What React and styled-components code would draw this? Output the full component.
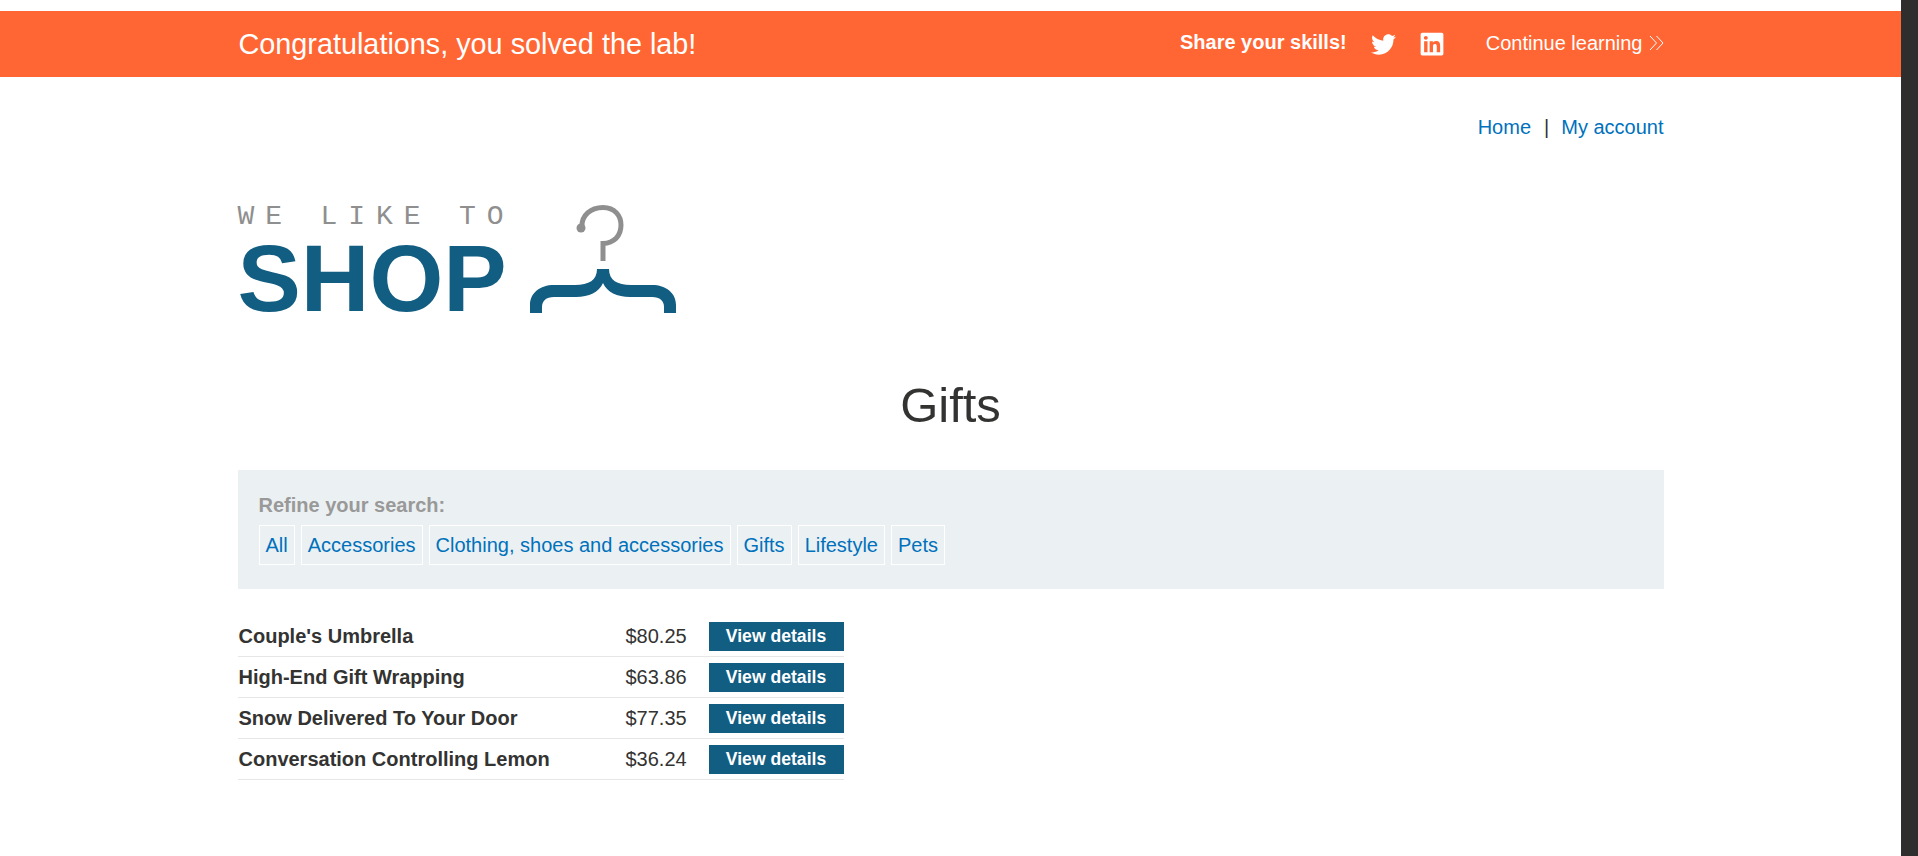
import React from "react";
import styled, { createGlobalStyle } from "styled-components";
import { FaTwitter, FaLinkedin } from "react-icons/fa";

const products = [
  { name: "Couple's Umbrella", price: "$80.25" },
  { name: "High-End Gift Wrapping", price: "$63.86" },
  { name: "Snow Delivered To Your Door", price: "$77.35" },
  { name: "Conversation Controlling Lemon", price: "$36.24" },
];

const categories = [
  "All",
  "Accessories",
  "Clothing, shoes and accessories",
  "Gifts",
  "Lifestyle",
  "Pets",
];

const Hanger = () => (
  <HangerSvg viewBox="0 0 146 108" width="146" height="108">
    <path
      d="M52 23 C51 10 61 2.5 73 2.5 C85 2.5 91 11 91 20 C91 31 84 38 73 38.5 V56"
      fill="none"
      stroke="#8f8f8f"
      strokeWidth="5"
    />
    <circle cx="51" cy="23" r="4.5" fill="#8f8f8f" />
    <path
      d="M0 108 V100 C0 88 10 80 24 80 H45 C59 80 67 75 67 64 H79 C79 75 87 80 101 80 H122 C136 80 146 88 146 100 V108 H134 V102 C134 96 130 92 122 92 H100 C87 92 77 87 73 78 C69 87 59 92 46 92 H24 C16 92 12 96 12 102 V108 Z"
      fill="#125d82"
    />
  </HangerSvg>
);

const ChevronsIcon = () => (
  <svg viewBox="0 0 15 16" width="15" height="16">
    <path
      d="M1 1 L7.5 8 L1 15 M7.5 1 L14 8 L7.5 15"
      fill="none"
      stroke="#fff"
      strokeWidth="1"
    />
  </svg>
);

const App = () => {
  return (
    <Page>
      <GlobalStyle />
      <Main>
        <Banner>
          <BannerInner>
            <BannerTitle>Congratulations, you solved the lab!</BannerTitle>
            <BannerActions>
              <ShareText>Share your skills!</ShareText>
              <SocialLink><FaTwitter size={25} /></SocialLink>
              <SocialLink><FaLinkedin size={26} /></SocialLink>
              <ContinueLink>
                Continue learning
                <ChevronsIcon />
              </ContinueLink>
            </BannerActions>
          </BannerInner>
        </Banner>
        <Content>
          <TopNav>
            <NavLink>Home</NavLink>
            <NavDivider>|</NavDivider>
            <NavLink>My account</NavLink>
          </TopNav>
          <Logo>
            <LogoText>
              <LogoTagline>WE LIKE TO</LogoTagline>
              <LogoWord>SHOP</LogoWord>
            </LogoText>
            <Hanger />
          </Logo>
          <Heading>Gifts</Heading>
          <FilterPanel>
            <FilterLabel>Refine your search:</FilterLabel>
            <FilterRow>
              {categories.map((category) => (
                <FilterLink key={category}>{category}</FilterLink>
              ))}
            </FilterRow>
          </FilterPanel>
          <ProductTable>
            {products.map((product) => (
              <ProductRow key={product.name}>
                <ProductName>{product.name}</ProductName>
                <ProductPrice>{product.price}</ProductPrice>
                <DetailsButton>View details</DetailsButton>
              </ProductRow>
            ))}
          </ProductTable>
        </Content>
      </Main>
      <ScrollStrip />
    </Page>
  );
};

export default App;

const GlobalStyle = createGlobalStyle`
  html, body {
    margin: 0;
    height: 100%;
    overflow: hidden;
    background: #fff;
  }
  body {
    color: #333332;
    font-family: "Liberation Sans", Arial, sans-serif;
    font-size: 20px;
  }
`;

const Page = styled.div`
  display: flex;
  height: 856px;
`;

const Main = styled.div`
  flex: 1;
  min-width: 0;
  padding-top: 11px;
`;

const ScrollStrip = styled.div`
  width: 17px;
  background: #2e2e2e;
`;

const Banner = styled.section`
  height: 66px;
  background: #ff6633;
  color: #fff;
`;

const BannerInner = styled.div`
  width: 1426px;
  height: 100%;
  margin: 0 auto;
  display: flex;
  align-items: center;
  justify-content: space-between;
`;

const BannerTitle = styled.h4`
  margin: 0;
  padding-left: 1px;
  font-size: 28.8px;
  font-weight: 400;
`;

const BannerActions = styled.div`
  display: flex;
  align-items: center;
`;

const ShareText = styled.span`
  margin: 0 24px 3px 0;
  font-size: 20px;
  font-weight: 700;
`;

const SocialLink = styled.a`
  display: flex;
  margin-right: 23px;
  color: #fff;
`;

const ContinueLink = styled.a`
  display: flex;
  align-items: center;
  gap: 6px;
  margin: 0 0 2px 18px;
  font-size: 20px;
  color: #fff;
`;

const Content = styled.main`
  width: 1426px;
  margin: 0 auto;
`;

const TopNav = styled.nav`
  display: flex;
  justify-content: flex-end;
  padding-top: 38px;
  line-height: 24px;
`;

const NavLink = styled.a`
  color: #0071bc;
`;

const NavDivider = styled.span`
  margin: 0 12px 0 13px;
  color: #333332;
`;

const Logo = styled.div`
  display: flex;
  align-items: flex-end;
  gap: 22px;
  margin-top: 66px;
  height: 108px;
`;

const LogoText = styled.div`
  display: flex;
  flex-direction: column;
  width: 270px;
`;

const LogoTagline = styled.span`
  margin-bottom: 10px;
  font-family: "Liberation Mono", "Courier New", monospace;
  font-size: 28px;
  letter-spacing: 10.9px;
  line-height: 24px;
  color: #8f8f8f;
  white-space: nowrap;
`;

const LogoWord = styled.span`
  margin-bottom: -4px;
  font-size: 95px;
  font-weight: 700;
  line-height: 78px;
  color: #125d82;
`;

const HangerSvg = styled.svg`
  display: block;
  flex: none;
`;

const Heading = styled.h1`
  margin: 64px 0 0;
  text-align: center;
  font-size: 49px;
  font-weight: 400;
  line-height: 56px;
`;

const FilterPanel = styled.section`
  margin-top: 37px;
  height: 119px;
  box-sizing: border-box;
  padding: 23px 20px 0 21px;
  background: #ebf0f2;
`;

const FilterLabel = styled.div`
  font-size: 20px;
  font-weight: 700;
  line-height: 24px;
  color: #999;
`;

const FilterRow = styled.div`
  display: flex;
  gap: 6px;
  margin-top: 8px;
`;

const FilterLink = styled.a`
  height: 40px;
  box-sizing: border-box;
  padding: 0 6px;
  border: 1px solid #fff;
  line-height: 38px;
  color: #0071bc;
`;

const ProductTable = styled.div`
  width: 606px;
  margin-top: 27px;
`;

const ProductRow = styled.div`
  display: flex;
  align-items: flex-start;
  height: 41px;
  box-sizing: border-box;
  padding-top: 6px;
  border-bottom: 1px solid #e6e6e6;
`;

const ProductName = styled.span`
  width: 387px;
  padding-left: 1px;
  font-weight: 700;
  font-size: 20px;
  line-height: 28px;
`;

const ProductPrice = styled.span`
  width: 83px;
  line-height: 29px;
`;

const DetailsButton = styled.button`
  width: 135px;
  height: 29px;
  padding: 0;
  border: 0;
  background: #125d82;
  color: #fff;
  font-family: inherit;
  font-size: 17.6px;
  font-weight: 700;
`;
